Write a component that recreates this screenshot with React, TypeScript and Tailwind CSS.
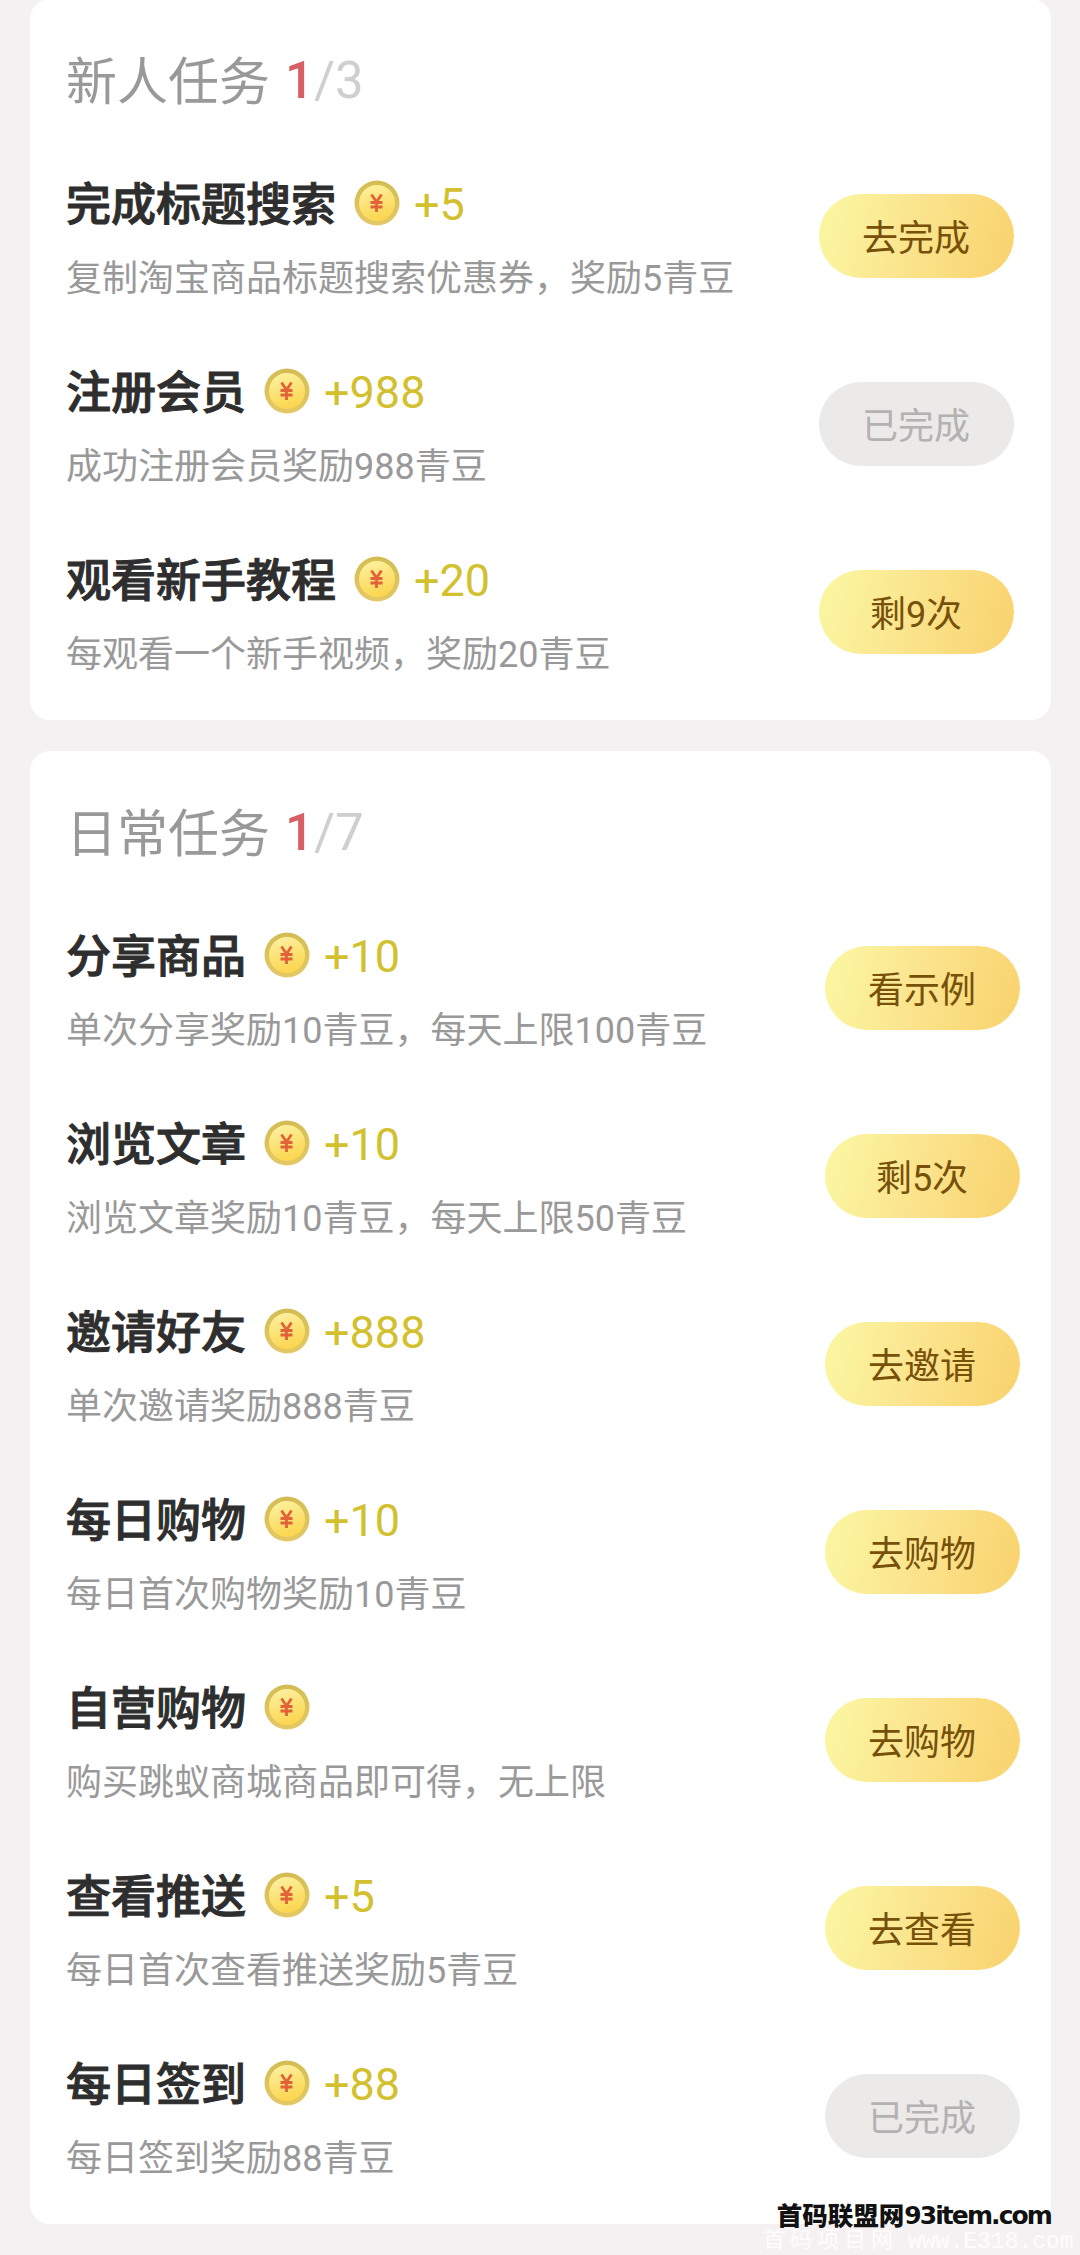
/**
 * Task center page
 *
 * Lists the newcomer and daily tasks with their coin rewards
 * and an action button per task.
 */

interface Task {
  title: string;
  reward?: string;
  desc: string;
  action: string;
  done?: boolean;
}

interface TaskSectionProps {
  title: string;
  finished: number;
  total: number;
  tasks: Task[];
  className?: string;
}

const newcomerTasks: Task[] = [
  { title: '完成标题搜索', reward: '+5', desc: '复制淘宝商品标题搜索优惠券，奖励5青豆', action: '去完成' },
  { title: '注册会员', reward: '+988', desc: '成功注册会员奖励988青豆', action: '已完成', done: true },
  { title: '观看新手教程', reward: '+20', desc: '每观看一个新手视频，奖励20青豆', action: '剩9次' },
];

const dailyTasks: Task[] = [
  { title: '分享商品', reward: '+10', desc: '单次分享奖励10青豆，每天上限100青豆', action: '看示例' },
  { title: '浏览文章', reward: '+10', desc: '浏览文章奖励10青豆，每天上限50青豆', action: '剩5次' },
  { title: '邀请好友', reward: '+888', desc: '单次邀请奖励888青豆', action: '去邀请' },
  { title: '每日购物', reward: '+10', desc: '每日首次购物奖励10青豆', action: '去购物' },
  { title: '自营购物', desc: '购买跳蚁商城商品即可得，无上限', action: '去购物' },
  { title: '查看推送', reward: '+5', desc: '每日首次查看推送奖励5青豆', action: '去查看' },
  { title: '每日签到', reward: '+88', desc: '每日签到奖励88青豆', action: '已完成', done: true },
];

function CoinIcon() {
  return (
    <svg className="w-[46px] h-[46px] shrink-0" viewBox="0 0 46 46" fill="none">
      <defs>
        <linearGradient id="coinRim" x1="0" y1="0" x2="0" y2="1">
          <stop offset="0" stopColor="#d3bd52" />
          <stop offset="1" stopColor="#e4c866" />
        </linearGradient>
        <linearGradient id="coinFace" x1="0.3" y1="0" x2="0.6" y2="1">
          <stop offset="0" stopColor="#fdf0a0" />
          <stop offset="1" stopColor="#fbd54b" />
        </linearGradient>
      </defs>
      <circle cx="23" cy="23" r="22.5" fill="url(#coinRim)" />
      <circle cx="23" cy="23" r="18" fill="url(#coinFace)" />
      <path
        d="M17.5 14.5L22.5 22L27.5 14.5M16.5 22.5H28.5M16.5 27H28.5M22.5 22V32"
        stroke="#e2633a"
        strokeWidth="2.8"
      />
    </svg>
  );
}

function TaskRow({ task }: { task: Task }) {
  return (
    <div className="h-[188px] flex items-start justify-between">
      <div className="pt-[26px]">
        <div className="h-[60px] flex items-center">
          <h3 className="pt-0.5 text-[45px] leading-[60px] font-medium text-[#2e2e2e] [-webkit-text-stroke:1px_#2e2e2e]">
            {task.title}
          </h3>
          <div className="ml-[18px] -mt-1">
            <CoinIcon />
          </div>
          {task.reward && (
            <span className="ml-[14px] text-[45px] leading-[60px] text-[#d3c02f]">{task.reward}</span>
          )}
        </div>
        <p className="mt-[18px] text-[36px] leading-[52px] text-[#999999] whitespace-nowrap">{task.desc}</p>
      </div>
      <button
        className={`mt-[45px] w-[195px] h-[84px] pt-[7px] pr-px shrink-0 rounded-full text-[36px] leading-[77px] text-center
          ${task.done ? 'bg-[#ece9e9] text-[#b3b1b1]' : 'bg-linear-[105deg,#fbf5a0_8%,#fbe58f_45%,#f9d470_95%] text-[#77500a]'}`}
      >
        {task.action}
      </button>
    </div>
  );
}

function TaskSection({ title, finished, total, tasks, className = '' }: TaskSectionProps) {
  return (
    <section className={`bg-white rounded-[20px] pl-9 pb-[7px] ${className}`}>
      <div className="h-[150px] pt-[47px] flex items-start text-[51px] leading-[70px]">
        <h2 className="pt-0.5 text-[#999999]">{title}</h2>
        <span className="ml-[15px] font-medium text-[#d95f67]">{finished}</span>
        <span className="text-[#cfcfcf]">/{total}</span>
      </div>
      {tasks.map((task) => (
        <TaskRow key={task.title} task={task} />
      ))}
    </section>
  );
}

export default function App() {
  return (
    <div className="relative w-[1080px] h-[2255px] overflow-hidden bg-[#f5f1f3] pl-[30px] pr-[29px] font-['Roboto','Noto_Sans_CJK_SC',sans-serif]">
      <div className="-mt-px flex flex-col gap-[31px]">
        <TaskSection title="新人任务" finished={1} total={3} tasks={newcomerTasks} className="pr-[37px]" />
        <TaskSection title="日常任务" finished={1} total={7} tasks={dailyTasks} className="pr-[31px]" />
      </div>

      {/* Site marks */}
      <div className="absolute right-[29px] bottom-[24px] flex items-center leading-[30px] text-[#111111] whitespace-nowrap">
        <span className="text-[25.5px] font-black">首码联盟网</span>
        <span className="text-[25px] font-bold font-['DejaVu_Sans',sans-serif] tracking-[-1.9px]">93item.com</span>
      </div>
      <div className="absolute left-[763px] bottom-0 flex items-end leading-[26px] text-white/80 whitespace-nowrap">
        <span className="text-[22px] leading-[32px] -mb-px tracking-[5px] h-[32px]">首码项目网</span>
        <span className="ml-[10px] text-[23px] font-['Liberation_Mono',monospace]">www.E318.com</span>
      </div>
    </div>
  );
}
